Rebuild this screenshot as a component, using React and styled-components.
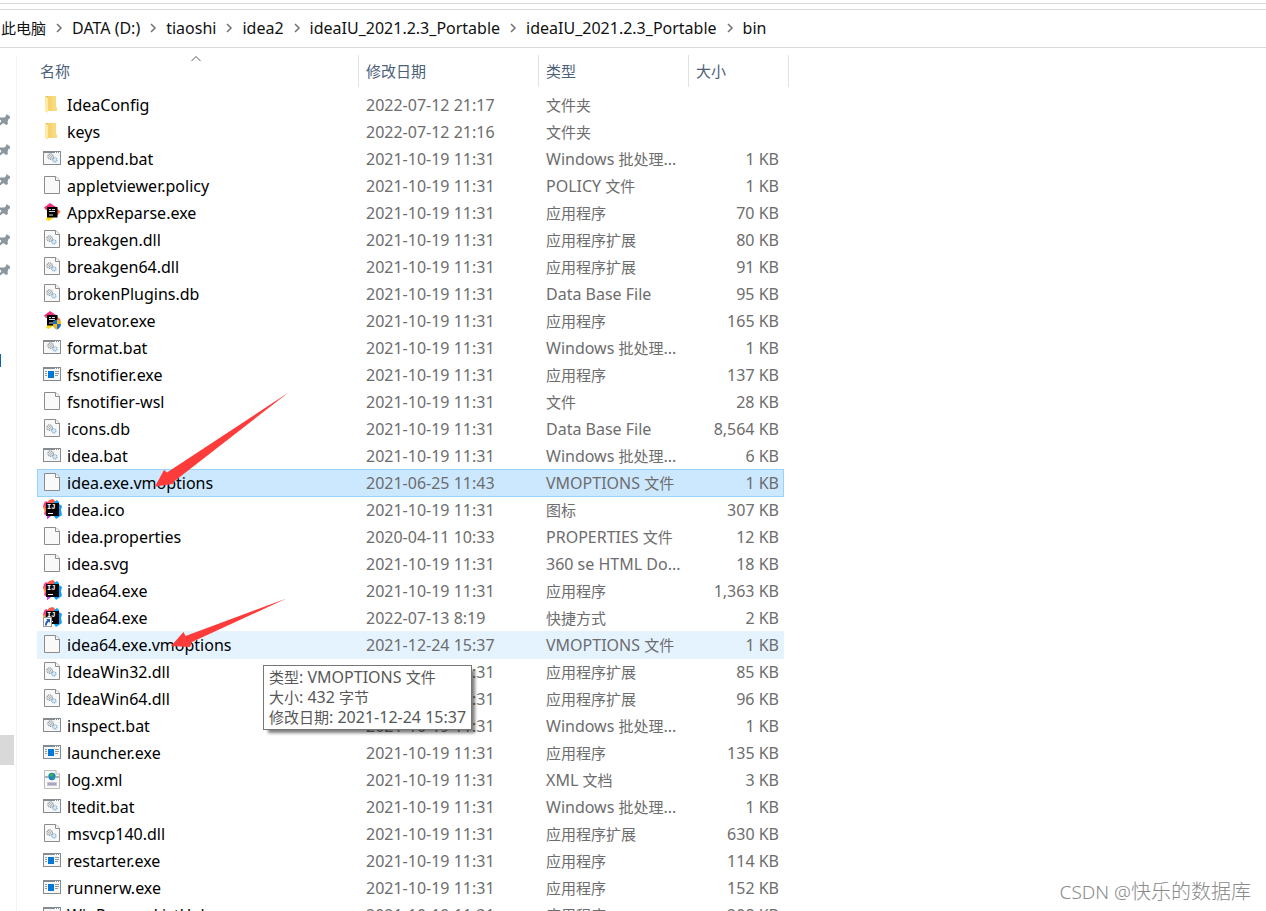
import React from "react";
import styled, { createGlobalStyle, css } from "styled-components";

const Global = createGlobalStyle`
  * { box-sizing: border-box; }
  html, body { margin: 0; background: #fff; }
  body {
    font-family: "Noto Sans", "Noto Sans CJK SC", sans-serif;
    font-size: 16px;
    color: #000;
  }
`;

const Han = styled.span`
  font-family: "Noto Sans CJK SC", sans-serif;
  font-size: ${(p) => p.$size || 15}px;
  font-weight: ${(p) => (p.$light ? 300 : 400)};
  line-height: 0;
`;

/* Sets runs of Chinese characters in their own font and size. */
function Txt({ children, han, light }) {
  return String(children)
    .split(/([\u4e00-\u9fff]+)/)
    .filter(Boolean)
    .map((part, i) =>
      /[\u4e00-\u9fff]/.test(part) ? <Han key={i} $size={han} $light={light}>{part}</Han> : part
    );
}

const Window = styled.div`
  display: flex;
  flex-direction: column;
  height: 100vh;
  overflow: hidden;
  position: relative;
`;

const Ribbon = styled.div`
  flex: none;
  height: 4px;
  border-bottom: 1px solid #d9d9d9;
`;

const AddressBar = styled.nav`
  flex: none;
  display: flex;
  align-items: center;
  height: 39px;
  margin-top: 5px;
  padding: 0 0 2px 1px;
  border-top: 1px solid #d9d9d9;
  border-bottom: 1px solid #d9d9d9;
`;

const Crumb = styled.button`
  border: 0;
  padding: 0;
  background: none;
  font: inherit;
  line-height: 24px;
  color: #111;
  white-space: pre;
`;

const Chevron = styled.svg`
  flex: none;
  width: 10px;
  height: 10px;
  margin: 0 8px;
  fill: none;
  stroke: #767676;
  stroke-width: 1.6;
`;

const Body = styled.div`
  flex: 1;
  min-height: 0;
  display: flex;
  align-items: flex-start;
`;

const Sidebar = styled.aside`
  flex: none;
  width: 17px;
  height: 100%;
  margin-top: 7px;
  padding-top: 50px;
  border-right: 1px solid #f3f3f3;
`;

const SideItem = styled.div`
  width: 14px;
  height: 30px;
  display: flex;
  align-items: center;
  background: ${(p) => (p.$active ? "#d9d9d9" : "none")};
`;

const SideMark = styled.i`
  width: 1px;
  height: 13px;
  background: #0a64b4;
`;

const Pane = styled.main`
  flex: 1;
  position: relative;
  padding-left: 20px;
`;

const Table = styled.table`
  width: 752px;
  table-layout: fixed;
  border-collapse: separate;
  border-spacing: 0;
`;

const Col = styled.col`
  width: ${(p) => p.$w}px;
`;

const Th = styled.th`
  padding: 7px 0 4px;
  font-weight: 400;
  text-align: left;
  color: #4c607a;
`;

const Head = styled.div`
  position: relative;
  height: 32px;
  padding-left: ${(p) => (p.$first ? 3 : 7)}px;
  line-height: 32px;
  border-right: ${(p) => (p.$line ? "1px solid #e2e2e2" : "0")};
`;

const SortMark = styled.svg`
  position: absolute;
  left: 50%;
  top: 0;
  width: 10px;
  height: 7px;
  margin-left: -7px;
  fill: none;
  stroke: #5a5a5a;
`;

const Td = styled.td`
  height: 27px;
  padding: ${(p) => (p.$right ? "2px 5px 0 0" : "2px 0 0 7px")};
  line-height: 25px;
  color: #6d6d6d;
  white-space: nowrap;
  text-align: ${(p) => (p.$right ? "right" : "left")};
`;

const NameTd = styled(Td)`
  padding: 2px 0 0 5px;
  color: #000;
`;

const Tr = styled.tr`
  ${(p) =>
    p.$state === "selected" &&
    css`
      ${Td}:not(:last-child) {
        background: #cce8ff;
        box-shadow: inset 0 1px #99d1ff, 0 1px #99d1ff;
      }
      ${Td}:first-child { border-left: 1px solid #99d1ff; padding-left: 4px; }
      ${Td}:nth-child(4) { border-right: 1px solid #99d1ff; padding-right: 4px; }
    `}
  ${(p) =>
    p.$state === "hover" &&
    css`
      ${Td}:not(:last-child) {
        background: #e5f3ff;
        box-shadow: 0 1px #e5f3ff;
      }
    `}
`;

const NameBox = styled.div`
  display: flex;
  align-items: center;
  gap: 5px;
  height: 25px;
`;

const IconSvg = styled.svg`
  flex: none;
  width: 20px;
  height: 20px;
  margin-bottom: 3px;
`;

const Arrows = styled.svg`
  position: absolute;
  left: 0;
  top: 0;
  width: 300px;
  height: 660px;
  fill: #fe3b3b;
  pointer-events: none;
`;

const Tooltip = styled.div`
  position: absolute;
  left: 263px;
  top: 665px;
  padding: 1px 5px 2px;
  border: 1px solid #767676;
  background: #fff;
  box-shadow: 4px 4px 3px -1px rgba(0, 0, 0, 0.5);
  color: #575757;
  line-height: 20px;
  white-space: nowrap;
`;

const Watermark = styled.div`
  position: absolute;
  right: 15px;
  bottom: 5px;
  font-size: 19px;
  font-weight: 300;
  line-height: 28px;
  color: #8a8a8a;
`;

const Gears = ({ x, y }) => (
  <g transform={`translate(${x} ${y})`} fill="none">
    <circle cx="3.6" cy="3.6" r="2.7" stroke="#8d979e" strokeWidth="1.3" strokeDasharray="1.2 0.6" />
    <circle cx="3.6" cy="3.6" r="1" stroke="#8d979e" strokeWidth="0.8" />
    <circle cx="7.9" cy="6.9" r="2" stroke="#7fb0d6" strokeWidth="1.3" strokeDasharray="1.1 0.5" />
    <circle cx="7.9" cy="6.9" r="0.7" fill="#a9cbe6" />
  </g>
);

const Page = () => (
  <>
    <path d="M2.5 1.5H13.500L17.500 5V18.500H2.500Z" fill="#f9f9f9" stroke="#8c8c8c" />
    <path d="M13.5 1.5V5.5H17.5" fill="#fff" stroke="#8c8c8c" />
  </>
);

const Frame = () => (
  <>
    <rect x="1.5" y="3.5" width="17" height="13" fill="#f7f7f7" stroke="#858c91" />
    <path d="M1 4.2H19" stroke="#858c91" strokeWidth="1.6" />
    <path d="M13 4.5H14M15 4.5H16M17 4.5H18" stroke="#fff" />
  </>
);

const Toolbox = () => (
  <>
    <path d="M2 5.5L8 1L14 5V8H4Z" fill="#f5317f" />
    <path d="M12 4L18.5 9.5L15 14H12Z" fill="#ff6a3c" />
    <path d="M4 18L6 13H15L7 19Z" fill="#ffd91a" />
    <rect x="5" y="5" width="10.5" height="10.5" fill="#000" />
    <path d="M7 7.5H9M10 7.5H13M7 9.5H13M7 13H11" stroke="#d8d8d8" />
  </>
);

const Idea = () => (
  <>
    <path d="M2 4L4 2L6 3L7 1L10 2L11 10L8 18L5 20L5 17L2 15L3 11L1 8Z" fill="#fb3a7c" />
    <path d="M1 8L3 7L4 12L3 13Z" fill="#fd8a30" />
    <path d="M3 15L6 14L9 17L5 20L5 17Z" fill="#b545e8" />
    <path d="M7 1L11 0L13 2L13 6H7Z" fill="#fb5a3c" />
    <path d="M12 3L15 1L17 3L17 5L20 7L19 11L20 16L17 18L14 20L12 17Z" fill="#0aa0f8" />
    <rect x="4" y="4" width="13" height="13" fill="#0b0508" />
    <text x="5" y="10" fill="#fff" fontFamily="Liberation Mono, monospace" fontWeight="700" fontSize="7">IJ</text>
    <path d="M6 14.5H11" stroke="#fff" />
  </>
);

const glyphs = {
  folder: (
    <>
      <path d="M6 2H14V13L15 14V17H6Z" fill="#f6d36f" />
      <path d="M10 2H14V13L15 14V17H10Z" fill="#f8da80" />
      <path d="M3 2L6 4V19L3 17Z" fill="#ffe9a6" />
      <path d="M3 2H6V4Z" fill="#e9bf55" />
    </>
  ),
  bat: <><Frame /><Gears x={5} y={5} /></>,
  file: <Page />,
  dll: <><Page /><Gears x={4} y={6} /></>,
  toolbox: <Toolbox />,
  elevator: (
    <>
      <Toolbox />
      <path d="M11 11L15 9.5L19 11V14C19 17 17 18.5 15 19.5C13 18.5 11 17 11 14Z" fill="#1b72c4" />
      <path d="M15 9.5L19 11V14H15ZM11 14H15V19.5C13 18.5 11 17 11 14Z" fill="#f9b91c" />
    </>
  ),
  app: (
    <>
      <Frame />
      <rect x="6" y="7" width="6" height="7" fill="#0078d7" />
      <path d="M3 7.5H5M3 9.5H5M3 11.5H5M13 7.5H17M13 9.5H17M13 11.5H16" stroke="#8e9aa3" />
    </>
  ),
  idea: <Idea />,
  link: (
    <>
      <Idea />
      <rect x="1.5" y="10.5" width="8" height="9" fill="#fff" stroke="#9a9a9a" />
      <path d="M4 12H8V16L6.8 14.8C5.5 15.7 5 16.5 4.8 18.5H3C3 16 3.8 14.5 5.3 13.3Z" fill="#2a5db0" />
    </>
  ),
  xml: (
    <>
      <path d="M2.5 1.5H14L17.5 5V19.5H2.5Z" fill="#f8f8f8" stroke="#bdbdbd" />
      <path d="M14 1.5V5H17.5" fill="#fff" stroke="#bdbdbd" />
      <path d="M3 8H6M14 8H17" stroke="#8f9ea6" strokeWidth="1.5" />
      <circle cx="10" cy="7.5" r="3.7" fill="#1e7fc8" />
      <path d="M8 5C10 3.5 12 4.5 11.5 6.5L9 8L7.5 7ZM10 9L13 7.5L12 10.5Z" fill="#35b549" />
      <rect x="5" y="13" width="10" height="4" fill="#c9c5d4" />
      <path d="M6 15H14" stroke="#8c86a0" />
    </>
  ),
};

const OLD = "2021-10-19 11:31";
const APP = "应用程序";
const DLL = "应用程序扩展";
const BAT = "Windows 批处理...";

const files = [
  ["folder", "IdeaConfig", "2022-07-12 21:17", "文件夹", ""],
  ["folder", "keys", "2022-07-12 21:16", "文件夹", ""],
  ["bat", "append.bat", OLD, BAT, "1 KB"],
  ["file", "appletviewer.policy", OLD, "POLICY 文件", "1 KB"],
  ["toolbox", "AppxReparse.exe", OLD, APP, "70 KB"],
  ["dll", "breakgen.dll", OLD, DLL, "80 KB"],
  ["dll", "breakgen64.dll", OLD, DLL, "91 KB"],
  ["dll", "brokenPlugins.db", OLD, "Data Base File", "95 KB"],
  ["elevator", "elevator.exe", OLD, APP, "165 KB"],
  ["bat", "format.bat", OLD, BAT, "1 KB"],
  ["app", "fsnotifier.exe", OLD, APP, "137 KB"],
  ["file", "fsnotifier-wsl", OLD, "文件", "28 KB"],
  ["dll", "icons.db", OLD, "Data Base File", "8,564 KB"],
  ["bat", "idea.bat", OLD, BAT, "6 KB"],
  ["file", "idea.exe.vmoptions", "2021-06-25 11:43", "VMOPTIONS 文件", "1 KB", "selected"],
  ["idea", "idea.ico", OLD, "图标", "307 KB"],
  ["file", "idea.properties", "2020-04-11 10:33", "PROPERTIES 文件", "12 KB"],
  ["file", "idea.svg", OLD, "360 se HTML Do...", "18 KB"],
  ["idea", "idea64.exe", OLD, APP, "1,363 KB"],
  ["link", "idea64.exe", "2022-07-13 8:19", "快捷方式", "2 KB"],
  ["file", "idea64.exe.vmoptions", "2021-12-24 15:37", "VMOPTIONS 文件", "1 KB", "hover"],
  ["dll", "IdeaWin32.dll", OLD, DLL, "85 KB"],
  ["dll", "IdeaWin64.dll", OLD, DLL, "96 KB"],
  ["bat", "inspect.bat", OLD, BAT, "1 KB"],
  ["app", "launcher.exe", OLD, APP, "135 KB"],
  ["xml", "log.xml", OLD, "XML 文档", "3 KB"],
  ["bat", "ltedit.bat", OLD, BAT, "1 KB"],
  ["dll", "msvcp140.dll", OLD, DLL, "630 KB"],
  ["app", "restarter.exe", OLD, APP, "114 KB"],
  ["app", "runnerw.exe", OLD, APP, "152 KB"],
  ["app", "WinProcessListHelper", OLD, APP, "208 KB"],
];

const crumbs = ["此电脑", "DATA (D:)", "tiaoshi", "idea2", "ideaIU_2021.2.3_Portable", "ideaIU_2021.2.3_Portable", "bin"];
const side = ["pin", "pin", "pin", "pin", "pin", "pin", "", "", "mark", "", "", "", "", "", "", "", "", "", "", "", "", "active"];

const Pin = () => (
  <svg width="11" height="14" viewBox="0 0 11 14" aria-hidden="true">
    <path d="M6.5 1L10 3.500V5.500L8.500 6L7.500 9L8 11L6 12L3.500 10L0 12.500V10L1.500 8L0 6.500V4.500L4.500 4.500L6 3Z" fill="#8b969e" />
  </svg>
);

export default function App() {
  return (
    <Window>
      <Global />
      <Ribbon />
      <AddressBar aria-label="Path">
        {crumbs.map((c, i) => (
          <React.Fragment key={i}>
            {i > 0 && <Chevron viewBox="0 0 10 10"><path d="M3 1L7 5L3 9" /></Chevron>}
            <Crumb type="button"><Txt>{c}</Txt></Crumb>
          </React.Fragment>
        ))}
      </AddressBar>
      <Body>
        <Sidebar>
          {side.map((s, i) => (
            <SideItem key={i} $active={s === "active"}>
              {s === "pin" && <Pin />}
              {s === "mark" && <SideMark />}
            </SideItem>
          ))}
        </Sidebar>
        <Pane>
          <Table>
            <colgroup>
              <Col $w={322} />
              <Col $w={180} />
              <Col $w={150} />
              <Col $w={95} />
              <Col $w={5} />
            </colgroup>
            <thead>
              <tr>
                <Th>
                  <Head $first $line>
                    <Txt>名称</Txt>
                    <SortMark viewBox="0 0 10 7"><path d="M0.5 6L5 1.5L9.5 6" /></SortMark>
                  </Head>
                </Th>
                <Th><Head $line><Txt>修改日期</Txt></Head></Th>
                <Th><Head $line><Txt>类型</Txt></Head></Th>
                <Th><Head><Txt>大小</Txt></Head></Th>
                <Th as="td"><Head $first $line /></Th>
              </tr>
            </thead>
            <tbody>
              {files.map(([icon, name, date, type, size, state], i) => (
                <Tr key={i} $state={state} aria-selected={state === "selected"}>
                  <NameTd>
                    <NameBox>
                      <IconSvg viewBox="0 0 20 20" aria-hidden="true">{glyphs[icon]}</IconSvg>
                      <span>{name}</span>
                    </NameBox>
                  </NameTd>
                  <Td>{date}</Td>
                  <Td><Txt>{type}</Txt></Td>
                  <Td $right>{size}</Td>
                  <Td />
                </Tr>
              ))}
            </tbody>
          </Table>
        </Pane>
      </Body>
      <Arrows viewBox="0 0 300 660" aria-hidden="true">
        <path d="M288.500 392.500L174 481.500L172.500 484L155 486.500L164 470L167 472.500Z" />
        <path d="M286.500 598.500L192 642L190 647L171 646L183.500 632L185.500 636Z" />
      </Arrows>
      <Tooltip role="tooltip">
        <div><Txt>类型: VMOPTIONS 文件</Txt></div>
        <div><Txt>大小: 432 字节</Txt></div>
        <div><Txt>修改日期: 2021-12-24 15:37</Txt></div>
      </Tooltip>
      <Watermark><Txt han={20} light>CSDN @快乐的数据库</Txt></Watermark>
    </Window>
  );
}
